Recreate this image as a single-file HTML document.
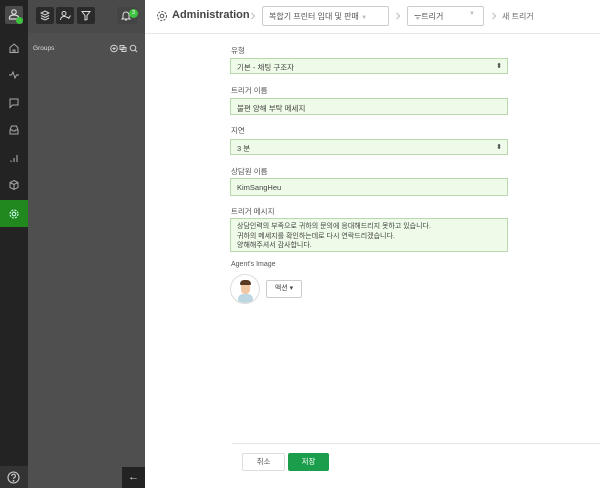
<!DOCTYPE html>
<html><head><meta charset="utf-8"><style>
*{box-sizing:border-box;margin:0;padding:0}
body{width:600px;height:488px;overflow:hidden;font-family:"Liberation Sans","Noto Sans CJK KR",sans-serif;background:#fff;position:relative;font-size:8px;color:#444}
.rail{position:absolute;left:0;top:0;width:28px;height:488px;background:#232323}
.panel{position:absolute;left:28px;top:0;width:117px;height:488px;background:#4f4f4f}
.ptop{position:absolute;left:0;top:0;width:117px;height:33px;background:#4a4a4a}
.pb{position:absolute;top:7px;width:18px;height:17px;background:#2a2a2a;border-radius:2px}
.ri{position:absolute;left:8px;width:12px;height:12px}
.abs{position:absolute}
.lbl{position:absolute;left:231px;font-size:7.5px;color:#555}
.fld{position:absolute;left:230px;width:278px;background:#eefbe8;border:1px solid #b9d8ae;font-size:7.5px;color:#444;padding:4px 6px}
.arr{position:absolute;right:5px;top:3px;font-size:7px;color:#444}
</style></head><body>
<div class="rail">
 <div class="abs" style="left:5px;top:6px;width:18px;height:18px;background:#4a4a4a;border-radius:2px"></div>
 <svg class="abs" style="left:8px;top:8px" width="12" height="12" viewBox="0 0 12 12" fill="none" stroke="#ddd" stroke-width="1.2"><circle cx="6" cy="4" r="2.2"/><path d="M1.5 11v-1.5c0-1.5 2-2.5 4.5-2.5s4.5 1 4.5 2.5V11z"/></svg>
 <div class="abs" style="left:16px;top:17px;width:7px;height:7px;border-radius:50%;background:#3fc23f"></div>
 <svg class="ri" style="top:42px" viewBox="0 0 12 12" fill="none" stroke="#aaa" stroke-width="1"><path d="M2 5.5L6 2l4 3.5V10.5H2z"/><path d="M5 10.5V8h2v2.5"/></svg>
 <svg class="ri" style="top:69px" viewBox="0 0 12 12" fill="none" stroke="#aaa" stroke-width="1"><path d="M1 6h2.5l1.5-3 2 6 1.5-3H11"/></svg>
 <svg class="ri" style="top:97px" viewBox="0 0 12 12" fill="none" stroke="#aaa" stroke-width="1"><path d="M2 2h8v6H4.5L2 10.5z"/></svg>
 <svg class="ri" style="top:124px" viewBox="0 0 12 12" fill="none" stroke="#aaa" stroke-width="1"><path d="M2 6l1.5-4h5L10 6v4H2z"/><path d="M2 6h2.5l.5 1h2l.5-1H10"/></svg>
 <svg class="ri" style="top:152px" viewBox="0 0 12 12" fill="none" stroke="#aaa" stroke-width="1.1"><path d="M3 10V8.5M6 10V6M9 10V3"/></svg>
 <svg class="ri" style="top:179px" viewBox="0 0 12 12" fill="none" stroke="#aaa" stroke-width="1"><path d="M6 1.5l4 2v5l-4 2-4-2v-5zM2 3.5l4 2 4-2M6 5.5v5"/></svg>
 <div class="abs" style="left:0;top:200px;width:28px;height:27px;background:#21881f"></div>
 <svg class="ri" style="top:208px" viewBox="0 0 12 12" fill="none" stroke="#cfe" stroke-width="1.1"><circle cx="6" cy="6" r="1.8"/><circle cx="6" cy="6" r="4" stroke-dasharray="2 1.2"/></svg>
 <div class="abs" style="left:0;top:466px;width:28px;height:22px;background:#333"></div>
 <svg class="abs" style="left:7px;top:471px" width="13" height="13" viewBox="0 0 13 13" fill="none" stroke="#ccc" stroke-width="1.1"><circle cx="6.5" cy="6.5" r="5.5"/><path d="M4.8 5a1.8 1.8 0 1 1 2.4 1.6c-.6.3-.7.6-.7 1.3"/><circle cx="6.5" cy="9.8" r=".4" fill="#ccc"/></svg>
</div>
<div class="panel">
 <div class="ptop"></div>
 <div class="pb" style="left:8px"></div><div class="pb" style="left:28px"></div><div class="pb" style="left:49px"></div>
 <div class="pb" style="left:89px;width:20px;background:#444"></div>
 <svg class="abs" style="left:12px;top:10px" width="10" height="11" viewBox="0 0 10 11" fill="none" stroke="#ddd" stroke-width="1"><path d="M5 1l4 2-4 2-4-2zM1 5.5l4 2 4-2M1 8l4 2 4-2"/></svg>
 <svg class="abs" style="left:32px;top:10px" width="11" height="11" viewBox="0 0 11 11" fill="none" stroke="#ddd" stroke-width="1"><circle cx="4" cy="3.5" r="2"/><path d="M0.5 10c0-2.5 2-3.5 3.5-3.5S7 7 7.5 8M7.5 7l1.3 1.3L10.5 5.5"/></svg>
 <svg class="abs" style="left:53px;top:10px" width="10" height="11" viewBox="0 0 10 11" fill="none" stroke="#ddd" stroke-width="1"><path d="M1 1.5h8L6 5.5v4L4 10V5.5z"/></svg>
 <svg class="abs" style="left:93px;top:10px" width="10" height="11" viewBox="0 0 10 11" fill="none" stroke="#ddd" stroke-width="1"><path d="M2 8V5a3 3 0 0 1 6 0v3l1 1H1zM4 10h2"/></svg>
 <div class="abs" style="left:101px;top:9px;width:9px;height:9px;border-radius:50%;background:#3fc23f;color:#fff;font-size:5.5px;text-align:center;line-height:9px">3</div>
 <div class="abs" style="left:5px;top:45px;font-size:6.5px;color:#ddd">Groups</div>
 <svg class="abs" style="left:82px;top:44px" width="30" height="9" viewBox="0 0 30 9" fill="none" stroke="#ddd" stroke-width="0.9"><circle cx="4" cy="4.5" r="3.3"/><path d="M2.5 4.5h3M4 3v3"/><rect x="10" y="1.5" width="4" height="4"/><rect x="12" y="3.5" width="4" height="4"/><circle cx="23" cy="4" r="2.8"/><path d="M25 6l2 2"/></svg>
 <div class="abs" style="left:94px;top:467px;width:23px;height:21px;background:#232323;color:#ddd;font-size:11px;text-align:center;line-height:20px">←</div>
</div>
<div class="abs" style="left:145px;top:33px;width:455px;height:1px;background:#e6e6e6"></div>
<svg class="abs" style="left:156px;top:10px" width="12" height="12" viewBox="0 0 12 12" fill="none" stroke="#555" stroke-width="1"><circle cx="6" cy="6" r="1.8"/><circle cx="6" cy="6" r="4.5" stroke-dasharray="2 1.4"/></svg>
<div class="abs" style="left:172px;top:9px;font-size:11px;font-weight:bold;color:#444">Administration</div>
<svg class="abs" style="left:250px;top:12px" width="6" height="8" viewBox="0 0 6 8" fill="none" stroke="#bbb"><path d="M1.5 1l3 3-3 3"/></svg>
<div class="abs" style="left:262px;top:6px;width:127px;height:20px;border:1px solid #ccc;border-radius:2px;font-size:8px;padding:4px 6px;color:#555">복합기 프린터 임대 및 판매 <span style="color:#bbb;font-size:6px">▼</span></div>
<svg class="abs" style="left:395px;top:12px" width="6" height="8" viewBox="0 0 6 8" fill="none" stroke="#bbb"><path d="M1.5 1l3 3-3 3"/></svg>
<div class="abs" style="left:407px;top:6px;width:77px;height:20px;border:1px solid #ccc;border-radius:2px;font-size:8px;padding:4px 6px;color:#555">ᯤ트리거<span style="position:absolute;right:8px;color:#bbb;font-size:6px">▼</span></div>
<svg class="abs" style="left:491px;top:12px" width="6" height="8" viewBox="0 0 6 8" fill="none" stroke="#bbb"><path d="M1.5 1l3 3-3 3"/></svg>
<div class="abs" style="left:502px;top:11px;font-size:8px;color:#666">새 트리거</div>

<div class="lbl" style="top:45px">유형</div>
<div class="fld" style="top:58px;height:16px;padding-top:3px">기본 - 채팅 구조자<span class="arr">⬍</span></div>
<div class="lbl" style="top:85px">트리거 이름</div>
<div class="fld" style="top:98px;height:17px">불편 양해 부탁 메세지</div>
<div class="lbl" style="top:125px">지연</div>
<div class="fld" style="top:139px;height:16px;padding-top:3px">3 분<span class="arr">⬍</span></div>
<div class="lbl" style="top:166px">상담원 이름</div>
<div class="fld" style="top:178px;height:18px">KimSangHeu</div>
<div class="lbl" style="top:206px">트리거 메시지</div>
<div class="fld" style="top:218px;height:34px;padding:3px 6px;line-height:9.5px;font-size:7px">상담인력의 부족으로 귀하의 문의에 응대해드리지 못하고 있습니다.<br>귀하의 메세지를 확인하는데로 다시 연락드리겠습니다.<br>양해해주셔서 감사합니다.</div>
<div class="lbl" style="top:261px;font-size:7px">Agent's Image</div>
<div class="abs" style="left:230px;top:274px;width:30px;height:30px;border-radius:50%;border:1px solid #ddd;overflow:hidden;background:#fff">
 <div class="abs" style="left:7px;top:19px;width:15px;height:12px;border-radius:5px 5px 0 0;background:#bcd6e2"></div>
 <div class="abs" style="left:10px;top:7px;width:9px;height:12px;border-radius:4px;background:#f2c7a4"></div>
 <div class="abs" style="left:9px;top:5px;width:11px;height:5px;border-radius:4px 4px 1px 1px;background:#5a3a22"></div>
</div>
<div class="abs" style="left:266px;top:280px;width:36px;height:18px;border:1px solid #ccc;border-radius:2px;font-size:7px;text-align:center;line-height:16px;color:#444">액션 ▾</div>
<div class="abs" style="left:232px;top:443px;width:368px;height:1px;background:#e6e6e6"></div>
<div class="abs" style="left:242px;top:453px;width:43px;height:18px;border:1px solid #ddd;border-radius:2px;font-size:7.5px;text-align:center;line-height:16px;color:#555">취소</div>
<div class="abs" style="left:288px;top:453px;width:41px;height:18px;background:#1b9e4b;border-radius:2px;font-size:7.5px;text-align:center;line-height:18px;color:#fff">저장</div>
</body></html>
